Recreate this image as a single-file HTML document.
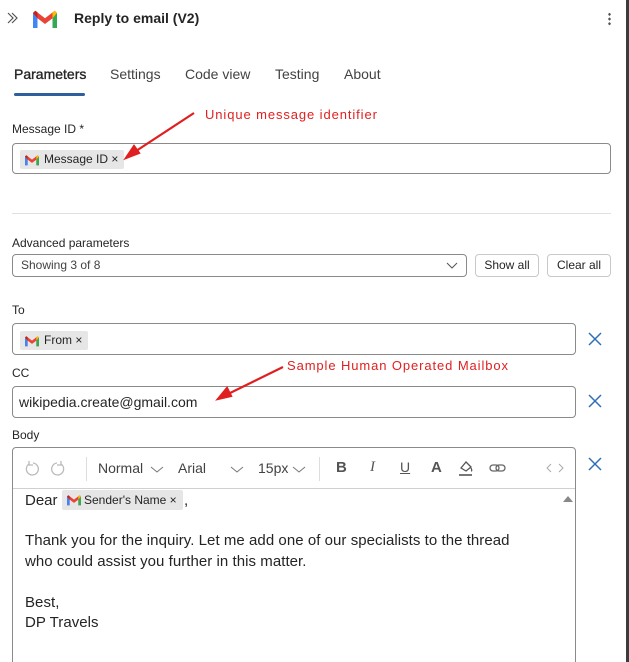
<!DOCTYPE html>
<html><head><style>
*{box-sizing:border-box;margin:0;padding:0}
html,body{width:629px;height:662px;overflow:hidden}
body{background:#fff;font-family:"Liberation Sans",sans-serif;color:#242424;position:relative}
.a{position:absolute}
.inp{position:absolute;border:1px solid #8a8a8a;border-radius:4px;background:#fff}
.lbl{position:absolute;font-size:12px;color:#242424}
.tok{position:absolute;background:#e6e6e6;font-size:12px;height:19px;line-height:19px;padding-left:24px;padding-right:6px;border-radius:2px}
.tok svg{position:absolute;left:3px;top:3px}
.btn{position:absolute;border:1px solid #c8c8c8;border-radius:4px;font-size:12px;text-align:center;line-height:21px;height:23px}
.tab{position:absolute;top:66px;font-size:14px;color:#424242}
.x{position:absolute}
.red{position:absolute;color:#e02020;font-size:13px;letter-spacing:.9px}
</style></head><body>
<svg width="0" height="0" style="position:absolute"><defs>
<g id="gm"><path d="M1 4v10h3V7.5l5 3.8 5-3.8V14h3V4l-1.5-1.5L9 7.5 2.5 2.5z" fill="#ea4335"/><path d="M1 4v10h3V7.5z" fill="#4285f4"/><path d="M14 7.5V14h3V4z" fill="#34a853"/><path d="M17 4l-3 3.5V3.5l1.5-1z" fill="#fbbc04"/><path d="M1 4l3 3.5V3.5l-1.5-1z" fill="#c5221f"/></g>
</defs></svg>
<div class="a" style="left:626px;top:0;width:3px;height:662px;background:#3c3c3c"></div>
<svg class="a" style="left:7px;top:12px" width="12" height="12" viewBox="0 0 12 12"><path d="M1 1l5 5-5 5M5 1l5 5-5 5" stroke="#555" fill="none" stroke-width="1.2"/></svg>
<svg class="a" style="left:30px;top:7px" width="30" height="24" viewBox="0 0 18 16"><use href="#gm"/></svg>
<div class="a" style="left:74px;top:10px;font-size:14px;font-weight:bold;color:#242424">Reply to email (V2)</div>
<div class="a" style="left:608px;top:12px;width:3px;height:14px;background:radial-gradient(circle,#555 1.2px,transparent 1.4px) 0 0/3px 4.7px"></div>
<div class="tab" style="left:14px;color:#242424;-webkit-text-stroke:.35px #242424">Parameters</div>
<div class="a" style="left:14px;top:93px;width:71px;height:3px;background:#2f5f9e;border-radius:2px"></div>
<div class="tab" style="left:110px">Settings</div>
<div class="tab" style="left:185px">Code view</div>
<div class="tab" style="left:275px">Testing</div>
<div class="tab" style="left:344px">About</div>
<div class="red" style="left:205px;top:107px">Unique message identifier</div>
<div class="lbl" style="left:12px;top:122px">Message ID *</div>
<div class="inp" style="left:12px;top:143px;width:599px;height:31px"></div>
<div class="tok" style="left:20px;top:150px">Message ID ×<svg width="18" height="14" viewBox="0 0 18 16"><use href="#gm"/></svg></div>
<div class="a" style="left:12px;top:213px;width:599px;height:1px;background:#e0e0e0"></div>
<div class="lbl" style="left:12px;top:236px">Advanced parameters</div>
<div class="inp" style="left:12px;top:254px;width:455px;height:23px;font-size:12px;line-height:21px;padding-left:8px;color:#424242">Showing 3 of 8</div>
<svg class="a" style="left:446px;top:262px" width="12" height="8"><path d="M1 1l5 5 5-5" stroke="#555" fill="none"/></svg>
<div class="btn" style="left:475px;top:254px;width:64px">Show all</div>
<div class="btn" style="left:547px;top:254px;width:64px">Clear all</div>
<div class="lbl" style="left:12px;top:303px">To</div>
<div class="inp" style="left:12px;top:323px;width:564px;height:32px"></div>
<div class="tok" style="left:20px;top:331px">From ×<svg width="18" height="14" viewBox="0 0 18 16"><use href="#gm"/></svg></div>
<svg class="x" style="left:588px;top:332px" width="14" height="14"><path d="M1 1l12 12M13 1L1 13" stroke="#2f6fb8" stroke-width="1.5"/></svg>
<div class="red" style="left:287px;top:358px">Sample Human Operated Mailbox</div>
<div class="lbl" style="left:12px;top:366px">CC</div>
<div class="inp" style="left:12px;top:386px;width:564px;height:32px;font-size:14px;line-height:30px;padding-left:6px">wikipedia.create@gmail.com</div>
<svg class="x" style="left:588px;top:394px" width="14" height="14"><path d="M1 1l12 12M13 1L1 13" stroke="#2f6fb8" stroke-width="1.5"/></svg>
<svg class="a" style="left:0;top:0" width="629" height="662"><g stroke="#e02020" stroke-width="2.2" fill="#e02020"><line x1="194" y1="113" x2="133" y2="153"/><path d="M126 158l8-12 5 7z"/><line x1="283" y1="367" x2="226" y2="395"/><path d="M218 399l9-11 4 8z"/></g></svg>
<div class="lbl" style="left:12px;top:428px">Body</div>
<div class="inp" style="left:12px;top:447px;width:564px;height:230px"></div>
<div class="a" style="left:13px;top:488px;width:562px;height:1px;background:#d0d0d0"></div>
<svg class="a" style="left:25px;top:460px" width="40" height="16" fill="none" stroke="#bbb" stroke-width="1.3"><path d="M4 4a6 6 0 1 0 4-1M4 1v4h4"/><path d="M36 4a6 6 0 1 1-4-1M36 1v4h-4"/></svg>
<div class="a" style="left:86px;top:457px;width:1px;height:24px;background:#ddd"></div>
<div class="a" style="left:98px;top:460px;font-size:14px;color:#424242">Normal</div>
<div class="a" style="left:178px;top:460px;font-size:14px;color:#424242">Arial</div>
<div class="a" style="left:258px;top:460px;font-size:14px;color:#424242">15px</div>
<svg class="a" style="left:150px;top:466px" width="160" height="8" fill="none" stroke="#777"><path d="M1 1l6 5 6-5M81 1l6 5 6-5M143 1l6 5 6-5"/></svg>
<div class="a" style="left:319px;top:457px;width:1px;height:24px;background:#ddd"></div>
<div class="a" style="left:336px;top:459px;font-size:15px;font-weight:bold;color:#555">B</div>
<div class="a" style="left:370px;top:459px;font-size:15px;font-style:italic;font-family:'Liberation Serif',serif;color:#555">I</div>
<div class="a" style="left:400px;top:459px;font-size:14px;text-decoration:underline;color:#555">U</div>
<div class="a" style="left:431px;top:459px;font-size:15px;font-weight:bold;color:#555">A</div>
<svg class="a" style="left:457px;top:459px" width="18" height="18" fill="none" stroke="#555" stroke-width="1.3"><path d="M4 9l5-6 5 5-5 4z M14 9c1 2 1 3 0 3"/><path d="M2 16h13" stroke-width="1.6"/></svg>
<svg class="a" style="left:489px;top:463px" width="18" height="10" fill="none" stroke="#666" stroke-width="1.3"><rect x="1" y="2" width="9" height="6" rx="3"/><rect x="7" y="2" width="9" height="6" rx="3"/></svg>
<svg class="a" style="left:546px;top:463px" width="18" height="10" fill="none" stroke="#aaa"><path d="M5 1L1 5l4 4M13 1l4 4-4 4"/></svg>
<svg class="x" style="left:588px;top:457px" width="14" height="14"><path d="M1 1l12 12M13 1L1 13" stroke="#2f6fb8" stroke-width="1.5"/></svg>
<div class="a" style="left:25px;top:492px;font-size:15px">Dear</div>
<div class="tok" style="left:62px;top:490px;height:20px;line-height:20px;padding-left:22px;font-size:12px">Sender's Name ×<svg width="18" height="14" viewBox="0 0 18 16"><use href="#gm"/></svg></div>
<div class="a" style="left:184px;top:492px;font-size:15px">,</div>
<svg class="a" style="left:563px;top:495px" width="10" height="7"><path d="M0 7l5-6 5 6z" fill="#888"/></svg>
<div class="a" style="left:25px;top:531px;font-size:15px;line-height:20.5px;letter-spacing:.05px">Thank you for the inquiry. Let me add one of our specialists to the thread<br>who could assist you further in this matter.<br><br>Best,<br>DP Travels</div>
</body></html>
